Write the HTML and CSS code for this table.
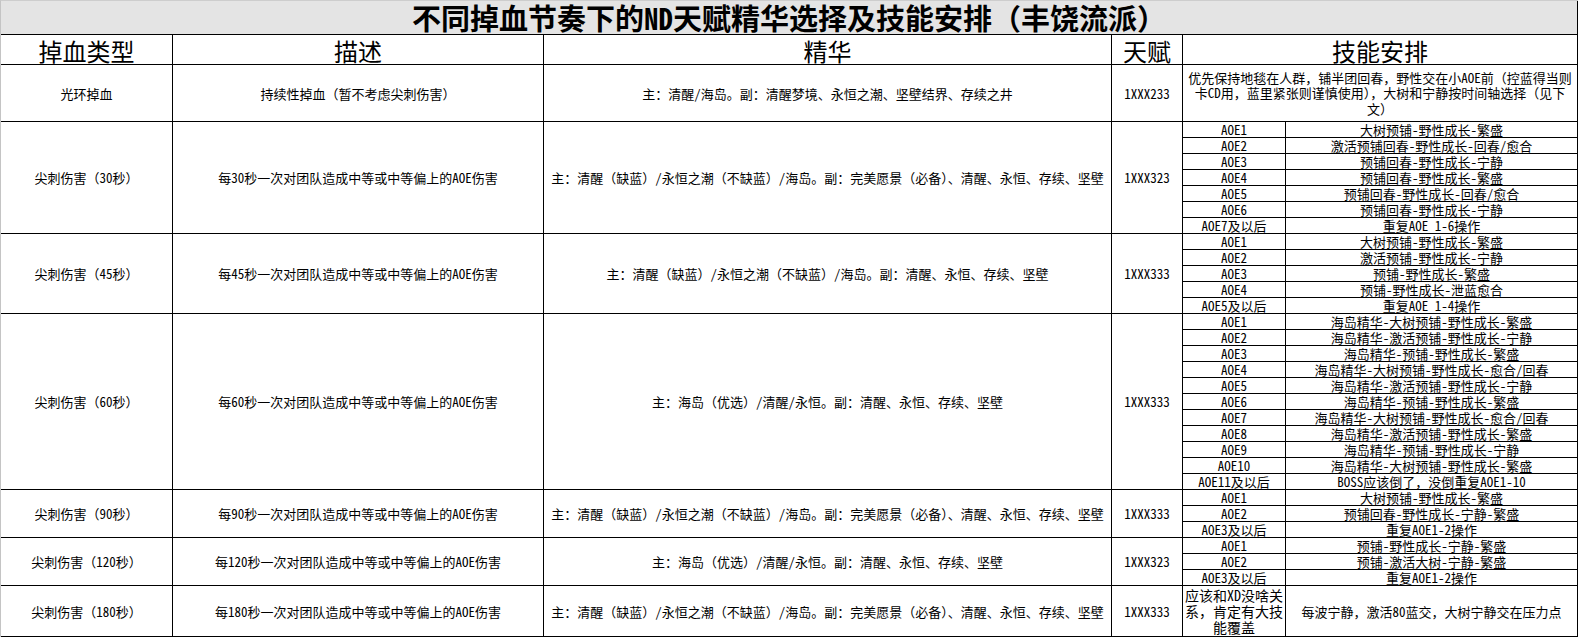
FILE: index.html
```html
<!DOCTYPE html>
<html lang="zh-CN">
<head>
<meta charset="utf-8">
<title>不同掉血节奏下的ND天赋精华选择及技能安排</title>
<link rel="stylesheet" href="styles.css">
</head>
<body>
<div class="sheet">
  <div class="cell title">不同掉血节奏下的ND天赋精华选择及技能安排（丰饶流派）</div>

  <div class="cell hd">掉血类型</div>
  <div class="cell hd">描述</div>
  <div class="cell hd">精华</div>
  <div class="cell hd">天赋</div>
  <div class="cell hd wide">技能安排</div>

  <div class="cell">光环掉血</div>
  <div class="cell">持续性掉血（暂不考虑尖刺伤害）</div>
  <div class="cell">主：清醒/海岛。副：清醒梦境、永恒之潮、坚壁结界、存续之井</div>
  <div class="cell">1XXX233</div>
  <div class="cell wide multi">优先保持地毯在人群，铺半团回春，野性交在小AOE前（控蓝得当则<br>卡CD用，蓝里紧张则谨慎使用），大树和宁静按时间轴选择（见下<br>文）</div>

  <div class="cell r7">尖刺伤害（30秒）</div>
  <div class="cell r7">每30秒一次对团队造成中等或中等偏上的AOE伤害</div>
  <div class="cell r7">主：清醒（缺蓝）/永恒之潮（不缺蓝）/海岛。副：完美愿景（必备）、清醒、永恒、存续、坚壁</div>
  <div class="cell r7">1XXX323</div>
  <div class="cell sub"><span class="u">AOE1</span></div><div class="cell sub"><span class="u">大树预铺-野性成长-繁盛</span></div>
  <div class="cell sub"><span class="u">AOE2</span></div><div class="cell sub"><span class="u">激活预铺回春-野性成长-回春/愈合</span></div>
  <div class="cell sub"><span class="u">AOE3</span></div><div class="cell sub"><span class="u">预铺回春-野性成长-宁静</span></div>
  <div class="cell sub"><span class="u">AOE4</span></div><div class="cell sub"><span class="u">预铺回春-野性成长-繁盛</span></div>
  <div class="cell sub"><span class="u">AOE5</span></div><div class="cell sub"><span class="u">预铺回春-野性成长-回春/愈合</span></div>
  <div class="cell sub"><span class="u">AOE6</span></div><div class="cell sub"><span class="u">预铺回春-野性成长-宁静</span></div>
  <div class="cell sub"><span class="u">AOE7及以后</span></div><div class="cell sub"><span class="u">重复AOE 1-6操作</span></div>

  <div class="cell r5">尖刺伤害（45秒）</div>
  <div class="cell r5">每45秒一次对团队造成中等或中等偏上的AOE伤害</div>
  <div class="cell r5">主：清醒（缺蓝）/永恒之潮（不缺蓝）/海岛。副：清醒、永恒、存续、坚壁</div>
  <div class="cell r5">1XXX333</div>
  <div class="cell sub"><span class="u">AOE1</span></div><div class="cell sub"><span class="u">大树预铺-野性成长-繁盛</span></div>
  <div class="cell sub"><span class="u">AOE2</span></div><div class="cell sub"><span class="u">激活预铺-野性成长-宁静</span></div>
  <div class="cell sub"><span class="u">AOE3</span></div><div class="cell sub"><span class="u">预铺-野性成长-繁盛</span></div>
  <div class="cell sub"><span class="u">AOE4</span></div><div class="cell sub"><span class="u">预铺-野性成长-泄蓝愈合</span></div>
  <div class="cell sub"><span class="u">AOE5及以后</span></div><div class="cell sub"><span class="u">重复AOE 1-4操作</span></div>

  <div class="cell r11">尖刺伤害（60秒）</div>
  <div class="cell r11">每60秒一次对团队造成中等或中等偏上的AOE伤害</div>
  <div class="cell r11">主：海岛（优选）/清醒/永恒。副：清醒、永恒、存续、坚壁</div>
  <div class="cell r11">1XXX333</div>
  <div class="cell sub"><span class="u">AOE1</span></div><div class="cell sub"><span class="u">海岛精华-大树预铺-野性成长-繁盛</span></div>
  <div class="cell sub"><span class="u">AOE2</span></div><div class="cell sub"><span class="u">海岛精华-激活预铺-野性成长-宁静</span></div>
  <div class="cell sub"><span class="u">AOE3</span></div><div class="cell sub"><span class="u">海岛精华-预铺-野性成长-繁盛</span></div>
  <div class="cell sub"><span class="u">AOE4</span></div><div class="cell sub"><span class="u">海岛精华-大树预铺-野性成长-愈合/回春</span></div>
  <div class="cell sub"><span class="u">AOE5</span></div><div class="cell sub"><span class="u">海岛精华-激活预铺-野性成长-宁静</span></div>
  <div class="cell sub"><span class="u">AOE6</span></div><div class="cell sub"><span class="u">海岛精华-预铺-野性成长-繁盛</span></div>
  <div class="cell sub"><span class="u">AOE7</span></div><div class="cell sub"><span class="u">海岛精华-大树预铺-野性成长-愈合/回春</span></div>
  <div class="cell sub"><span class="u">AOE8</span></div><div class="cell sub"><span class="u">海岛精华-激活预铺-野性成长-繁盛</span></div>
  <div class="cell sub"><span class="u">AOE9</span></div><div class="cell sub"><span class="u">海岛精华-预铺-野性成长-宁静</span></div>
  <div class="cell sub"><span class="u">AOE10</span></div><div class="cell sub"><span class="u">海岛精华-大树预铺-野性成长-繁盛</span></div>
  <div class="cell sub"><span class="u">AOE11及以后</span></div><div class="cell sub"><span class="u">BOSS应该倒了，没倒重复AOE1-10</span></div>

  <div class="cell r3">尖刺伤害（90秒）</div>
  <div class="cell r3">每90秒一次对团队造成中等或中等偏上的AOE伤害</div>
  <div class="cell r3">主：清醒（缺蓝）/永恒之潮（不缺蓝）/海岛。副：完美愿景（必备）、清醒、永恒、存续、坚壁</div>
  <div class="cell r3">1XXX333</div>
  <div class="cell sub"><span class="u">AOE1</span></div><div class="cell sub"><span class="u">大树预铺-野性成长-繁盛</span></div>
  <div class="cell sub"><span class="u">AOE2</span></div><div class="cell sub"><span class="u">预铺回春-野性成长-宁静-繁盛</span></div>
  <div class="cell sub"><span class="u">AOE3及以后</span></div><div class="cell sub"><span class="u">重复AOE1-2操作</span></div>

  <div class="cell r3">尖刺伤害（120秒）</div>
  <div class="cell r3">每120秒一次对团队造成中等或中等偏上的AOE伤害</div>
  <div class="cell r3">主：海岛（优选）/清醒/永恒。副：清醒、永恒、存续、坚壁</div>
  <div class="cell r3">1XXX323</div>
  <div class="cell sub"><span class="u">AOE1</span></div><div class="cell sub"><span class="u">预铺-野性成长-宁静-繁盛</span></div>
  <div class="cell sub"><span class="u">AOE2</span></div><div class="cell sub"><span class="u">预铺-激活大树-宁静-繁盛</span></div>
  <div class="cell sub"><span class="u">AOE3及以后</span></div><div class="cell sub"><span class="u">重复AOE1-2操作</span></div>

  <div class="cell">尖刺伤害（180秒）</div>
  <div class="cell">每180秒一次对团队造成中等或中等偏上的AOE伤害</div>
  <div class="cell">主：清醒（缺蓝）/永恒之潮（不缺蓝）/海岛。副：完美愿景（必备）、清醒、永恒、存续、坚壁</div>
  <div class="cell">1XXX333</div>
  <div class="cell big">应该和XD没啥关<br>系，肯定有大技<br>能覆盖</div>
  <div class="cell">每波宁静，激活80蓝交，大树宁静交在压力点</div>
</div>
</body>
</html>
```

FILE: styles.css
```css
* {
  box-sizing: border-box;
}

html, body {
  margin: 0;
  padding: 0;
  background: #ffffff;
}

body {
  font-family: "Noto Sans Mono CJK SC", "Noto Sans CJK SC", sans-serif;
  font-size: 13px;
  color: #000000;
}

.sheet {
  display: grid;
  width: 1578px;
  grid-template-columns: 172px 371px 568px 71px 103px 292px;
  grid-template-rows: 34px 30px 57px repeat(29, 16px) 51px;
  border-top: 1px solid #cdcdcd;
  border-left: 1px solid #c4c4c4;
}

.cell {
  display: flex;
  align-items: center;
  justify-content: center;
  text-align: center;
  white-space: nowrap;
  border-right: 1px solid #000;
  border-bottom: 1px solid #000;
  line-height: 15px;
}

.title {
  grid-column: 1 / -1;
  background: #e4e4e4;
  font-size: 29px;
  font-weight: 700;
  line-height: 33px;
}

.hd {
  font-size: 24px;
  line-height: 29px;
  padding-top: 2px;
}

.wide {
  grid-column: span 2;
}

.multi {
  line-height: 15.5px;
}

.r3 { grid-row: span 3; }
.r5 { grid-row: span 5; }
.r7 { grid-row: span 7; }
.r11 { grid-row: span 11; }

.sub {
  line-height: 15px;
}

.u {
  text-decoration: underline;
  text-underline-offset: 2px;
}

.big {
  font-size: 14px;
  line-height: 16px;
}
```
